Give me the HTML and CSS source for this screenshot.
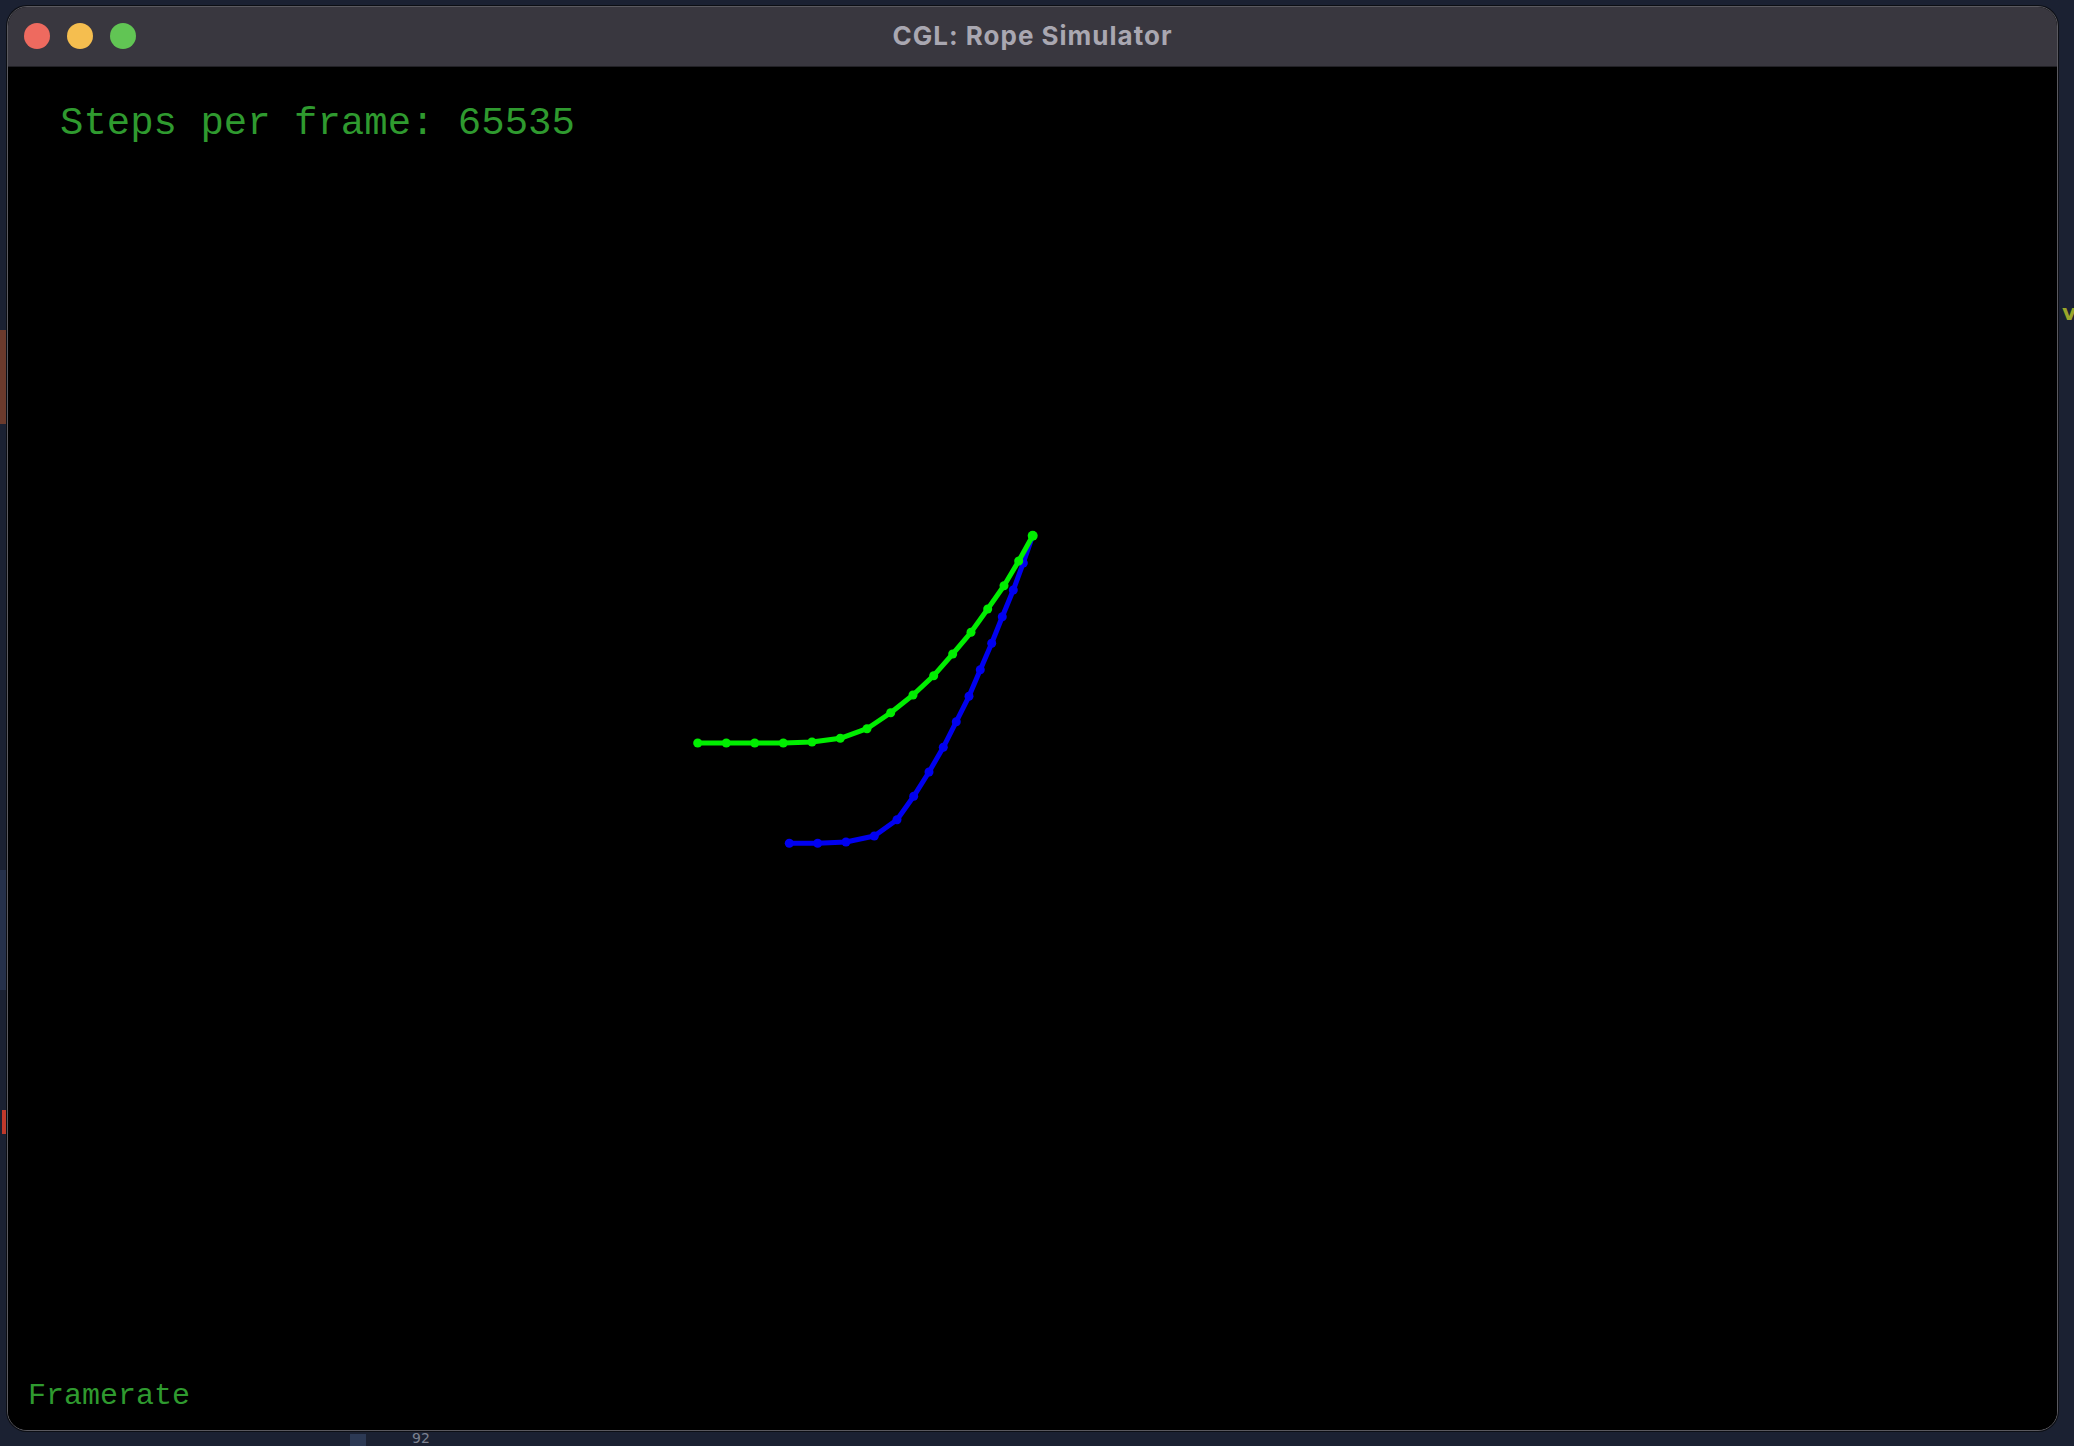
FILE: index.html
```html
<!DOCTYPE html>
<html>
<head>
<meta charset="utf-8">
<title>CGL: Rope Simulator</title>
<link rel="stylesheet" href="styles.css">
</head>
<body>
<div class="desktop">
  <div class="frag frag-brown"></div>
  <div class="frag frag-panel"></div>
  <div class="frag frag-red"></div>
  <div class="frag frag-v">v</div>
  <div class="frag frag-92">92</div>
  <div class="frag frag-bottombar"></div>

  <div class="window">
    <div class="titlebar">
      <div class="lights">
        <span class="light red"></span>
        <span class="light yellow"></span>
        <span class="light green"></span>
      </div>
      <div class="title">CGL: Rope Simulator</div>
    </div>
    <div class="canvas">
      <svg class="scene" viewBox="8 67 2049 1363" preserveAspectRatio="none">
        <g class="rope-blue">
          <polyline points="789.3,843.3 817.7,843.3 846,842 874.3,836 897,819.7 913.7,796.3 929,772 943.3,747.3 956.3,721.7 969,696.3 980.3,669.7 991.7,643.3 1002.3,616.7 1013.3,590 1023.3,563 1032.7,535.7"/>
          <circle cx="789.3" cy="843.3" r="4.5"/><circle cx="817.7" cy="843.3" r="4.5"/><circle cx="846" cy="842" r="4.5"/><circle cx="874.3" cy="836" r="4.5"/><circle cx="897" cy="819.7" r="4.5"/><circle cx="913.7" cy="796.3" r="4.5"/><circle cx="929" cy="772" r="4.5"/><circle cx="943.3" cy="747.3" r="4.5"/><circle cx="956.3" cy="721.7" r="4.5"/><circle cx="969" cy="696.3" r="4.5"/><circle cx="980.3" cy="669.7" r="4.5"/><circle cx="991.7" cy="643.3" r="4.5"/><circle cx="1002.3" cy="616.7" r="4.5"/><circle cx="1013.3" cy="590" r="4.5"/><circle cx="1023.3" cy="563" r="4.5"/>
        </g>
        <g class="rope-green">
          <polyline points="697.7,743 726.3,743 754.7,743 783.3,743 812,742 840.3,738.3 867,728.7 890.7,712.7 913,695 933.7,675.7 952.7,654 971,632.3 987.7,609 1004,585.7 1018.7,561 1032.7,535.7"/>
          <circle cx="697.7" cy="743" r="4.5"/><circle cx="726.3" cy="743" r="4.5"/><circle cx="754.7" cy="743" r="4.5"/><circle cx="783.3" cy="743" r="4.5"/><circle cx="812" cy="742" r="4.5"/><circle cx="840.3" cy="738.3" r="4.5"/><circle cx="867" cy="728.7" r="4.5"/><circle cx="890.7" cy="712.7" r="4.5"/><circle cx="913" cy="695" r="4.5"/><circle cx="933.7" cy="675.7" r="4.5"/><circle cx="952.7" cy="654" r="4.5"/><circle cx="971" cy="632.3" r="4.5"/><circle cx="987.7" cy="609" r="4.5"/><circle cx="1004" cy="585.7" r="4.5"/><circle cx="1018.7" cy="561" r="4.5"/><circle cx="1032.7" cy="535.7" r="5"/>
        </g>
      </svg>
      <div class="hud-steps">Steps per frame: 65535</div>
      <div class="hud-fps">Framerate</div>
    </div>
  </div>
</div>
</body>
</html>
```

FILE: styles.css
```css
html, body {
  margin: 0;
  padding: 0;
  width: 2074px;
  height: 1446px;
  overflow: hidden;
  background: #1a2030;
}

.desktop {
  position: relative;
  width: 2074px;
  height: 1446px;
  background: #1b2132;
}

.frag {
  position: absolute;
}

.frag-brown {
  left: 0;
  top: 330px;
  width: 8px;
  height: 94px;
  background: #6b3a2c;
}

.frag-panel {
  left: 0;
  top: 870px;
  width: 8px;
  height: 120px;
  background: #25304a;
}

.frag-red {
  left: 2px;
  top: 1110px;
  width: 4px;
  height: 24px;
  background: #c0392b;
}

.frag-v {
  left: 2062px;
  top: 300px;
  font-family: "DejaVu Sans", sans-serif;
  font-weight: bold;
  font-size: 22px;
  color: #9aa52a;
}

.frag-bottombar {
  left: 350px;
  top: 1434px;
  width: 16px;
  height: 12px;
  background: #2c3954;
}

.frag-92 {
  left: 412px;
  top: 1431px;
  font-family: "DejaVu Sans", sans-serif;
  font-size: 14px;
  line-height: 14px;
  color: #7c8190;
}

.window {
  position: absolute;
  left: 7px;
  top: 6px;
  width: 2051px;
  height: 1425px;
  box-sizing: border-box;
  border: 1px solid #5a595f;
  border-radius: 20px;
  overflow: hidden;
  display: flex;
  flex-direction: column;
  background: #000;
  box-shadow: 0 0 0 1px #0c0e14;
}

.titlebar {
  position: relative;
  height: 59px;
  flex: 0 0 59px;
  background: #39373f;
  border-bottom: 1px solid #222126;
  display: flex;
  align-items: center;
  justify-content: center;
}

.lights {
  position: absolute;
  left: 16px;
  top: 16px;
  display: flex;
  gap: 17px;
}

.light {
  width: 26px;
  height: 26px;
  border-radius: 50%;
  display: block;
}

.light.red { background: #ee6a5f; }
.light.yellow { background: #f5be4f; }
.light.green { background: #61c554; }

.title {
  font-family: Inter, "Liberation Sans", sans-serif;
  font-weight: 700;
  font-size: 26px;
  letter-spacing: 1px;
  color: #a9a7b1;
  line-height: 26px;
  margin-top: -1px;
}

.canvas {
  position: relative;
  flex: 1 1 auto;
  background: #000;
  display: flex;
  flex-direction: column;
  justify-content: space-between;
  padding: 38px 0 19px 0;
}

.scene {
  position: absolute;
  left: 0;
  top: 0;
  width: 100%;
  height: 100%;
}

.rope-green polyline {
  fill: none;
  stroke: #00ee00;
  stroke-width: 5;
  stroke-linejoin: round;
  stroke-linecap: round;
}
.rope-green circle { fill: #00ee00; }

.rope-blue polyline {
  fill: none;
  stroke: #0000f0;
  stroke-width: 5;
  stroke-linejoin: round;
  stroke-linecap: round;
}
.rope-blue circle { fill: #0000f0; }

.hud-steps {
  position: relative;
  margin-left: 52px;
  font-family: "Liberation Mono", monospace;
  font-size: 39px;
  line-height: 39px;
  color: #2f9a2f;
}

.hud-fps {
  position: relative;
  margin-left: 20px;
  font-family: "Liberation Mono", monospace;
  font-size: 30px;
  line-height: 30px;
  color: #2f9a2f;
}
```
